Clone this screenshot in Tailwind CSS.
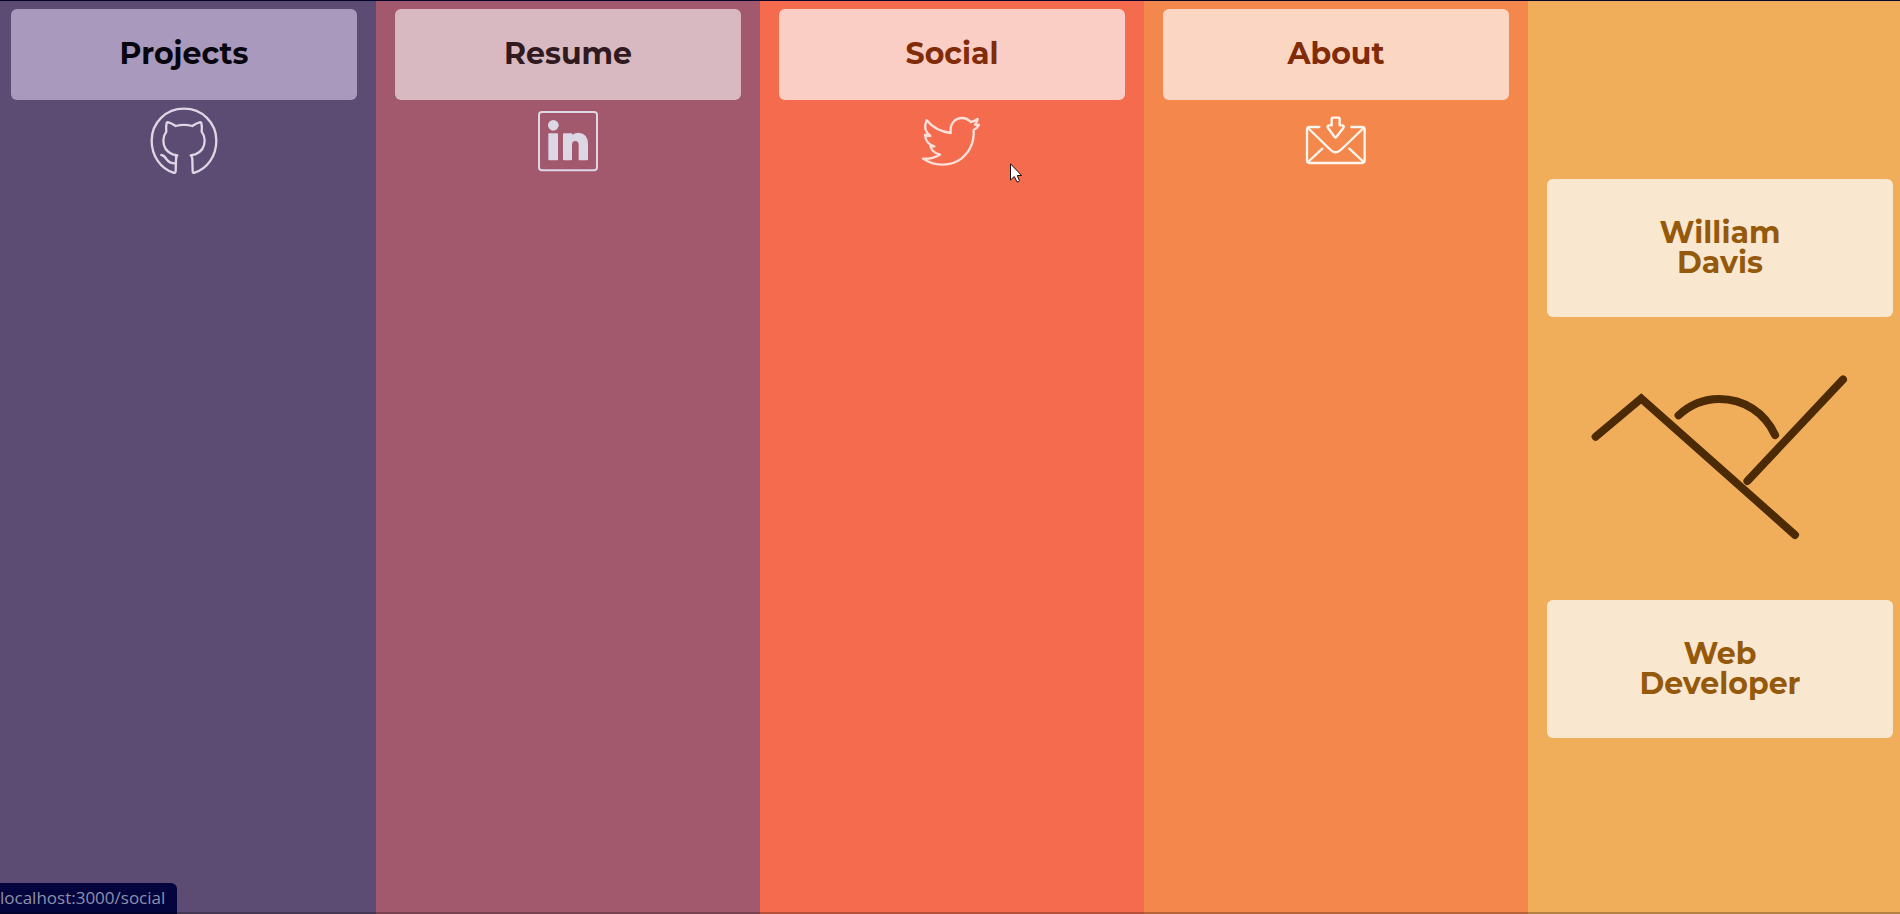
<!DOCTYPE html>
<html lang="en">
<head>
<meta charset="utf-8">
<meta name="viewport" content="width=device-width, initial-scale=1">
<title>William Davis</title>
<script src="https://cdn.jsdelivr.net/npm/@tailwindcss/browser@4"></script>
</head>
<body class="overflow-hidden font-['Montserrat','Inter',sans-serif]">
<div class="relative flex min-h-screen flex-col overflow-hidden border-t border-[#05052a]">
  <main class="-mr-3 -ml-2 grid grow grid-cols-5 text-center text-[30px] leading-none font-bold">
    <section class="flex flex-col items-center gap-px bg-[#5c4b72] pt-2">
      <a href="/projects" class="w-9/10 rounded-md bg-[#a999bd] pt-[30px] pb-[31px] text-[#07060f]">Projects</a>
      <a href="https://github.com" aria-label="GitHub">
        <svg class="size-20" viewBox="12 3 240 240" fill="none" stroke="#ddd7e5" stroke-width="7" stroke-linecap="round" stroke-linejoin="round">
          <path d="M106 166Q110 169 108 180L107 214Q106 220 100 218C62 205 35 168 35 122C35 67 78 26 132 26C186 26 229 67 229 122C229 168 202 205 164 218Q158 220 158 214L157 180Q157 169 152 166Q158 165 166 163C184 156 194 142 194 121Q194 107 185 95Q187 82 184 69Q183 66 179 67Q168 70 157 78Q132 71 107 78Q96 70 85 67Q81 66 80 69Q77 82 79 95Q70 107 70 121C70 142 80 156 98 163Q106 165 112 166Q109 169 108 177"/>
          <path d="M64 165Q72 166 79 177Q89 191 107 190"/>
        </svg>
      </a>
    </section>
    <section class="flex flex-col items-center gap-px bg-[#a2596d] pt-2">
      <a href="/resume" class="w-9/10 rounded-md bg-[#d9b9c1] pt-[30px] pb-[31px] text-[#301a20]">Resume</a>
      <a href="https://www.linkedin.com" aria-label="LinkedIn">
        <svg class="size-20" viewBox="-6 3 240 240" fill="#ddd7e5">
          <rect x="27" y="36" width="174" height="175" rx="9" fill="none" stroke="#ddd7e5" stroke-width="6"/>
          <circle cx="70" cy="76" r="16"/>
          <rect x="55" y="100" width="29" height="81" rx="3"/>
          <path d="M102 100H124Q127 100 127 104Q136 98 146 98Q174 100 174 133V178Q174 181 171 181H149Q146 181 146 178V135Q146 123 136 123Q126 123 126 135V178Q126 181 123 181H102Q99 181 99 178V103Q99 100 102 100Z"/>
        </svg>
      </a>
    </section>
    <section class="flex flex-col items-center gap-px bg-[#f46b4d] pt-2">
      <a href="/social" class="w-9/10 rounded-md bg-[#fbcec5] pt-[30px] pb-[31px] text-[#812b08]">Social</a>
      <a href="https://twitter.com" aria-label="Twitter">
        <svg class="size-20" viewBox="6 -12 240 240" fill="none" stroke="#fde1da" stroke-width="7" stroke-linecap="round" stroke-linejoin="round">
          <path d="M50 46Q77 79 122 84C119 57 134 39 156 39Q172 39 182 51Q194 49 203 42Q202 52 195 59L207 60Q201 70 191 75C193 112 180 139 155 160C124 184 75 186 39 161Q67 162 90 149Q67 144 61 123L73 124Q47 116 45 90L61 93Q37 75 50 46Z"/>
        </svg>
      </a>
    </section>
    <section class="flex flex-col items-center gap-px bg-[#f4874b] pt-2">
      <a href="/about" class="w-9/10 rounded-md bg-[#fad6c3] pt-[30px] pb-[31px] text-[#812b08]">About</a>
      <a href="mailto:hello@localhost" aria-label="Email">
        <svg class="size-20" viewBox="3 -12 240 240" fill="none" stroke="#fff6ef" stroke-width="7" stroke-linecap="round" stroke-linejoin="round">
          <path d="M73 66H44Q36 66 36 74V166Q36 174 44 174H201Q209 174 209 166V74Q209 66 201 66H169"/>
          <path d="M39 69L107 135Q122 149 137 135L206 69M39 171L82 131M206 171L163 131"/>
          <path d="M113 38H131Q134 38 134 41V61H142Q149 62 145 69L124 96Q122 99 119 96L99 69Q95 62 102 61H110V41Q110 38 113 38Z"/>
        </svg>
      </a>
    </section>
    <section class="flex flex-col items-center justify-center bg-[#f1ae5a] pt-0.5">
      <h1 class="w-9/10 rounded-md bg-[#fae7cf] py-[39px] text-[#95590b]">William<br>Davis</h1>
      <svg class="h-[283px] w-9/10" viewBox="-39 -99 1038 849" fill="none" stroke="#4d2a06" stroke-width="24" stroke-linecap="round" role="img" aria-label="William Davis logo">
        <path d="M107 260L244 145L706 555M563 393L850 88M356 196C390 165 432 147 478 147C553 147 615 188 646 255"/>
      </svg>
      <h2 class="w-9/10 rounded-md bg-[#fae7cf] py-[39px] text-[#95590b]">Web<br>Developer</h2>
    </section>
  </main>

  <div class="absolute bottom-0 left-0 rounded-tr-md bg-[#04043f] pt-1 pr-3 pb-[5px] font-['Open_Sans',sans-serif] text-[17px] leading-[22px] text-[#8d92aa]">localhost:3000/social</div>
  <div class="absolute inset-x-0 bottom-0 h-0.5 bg-black/25"></div>
  <svg class="absolute top-[162px] left-[1010px] h-5 w-3" viewBox="0 0 12 20" fill="#fff" stroke="#1b0d16" stroke-width="1">
    <path d="M.5 .8V17L4.3 13.5L7 19Q9.500 19 9.300 17.500L7.300 12.500H11.600Z"/>
  </svg>
</div>
</body>
</html>
